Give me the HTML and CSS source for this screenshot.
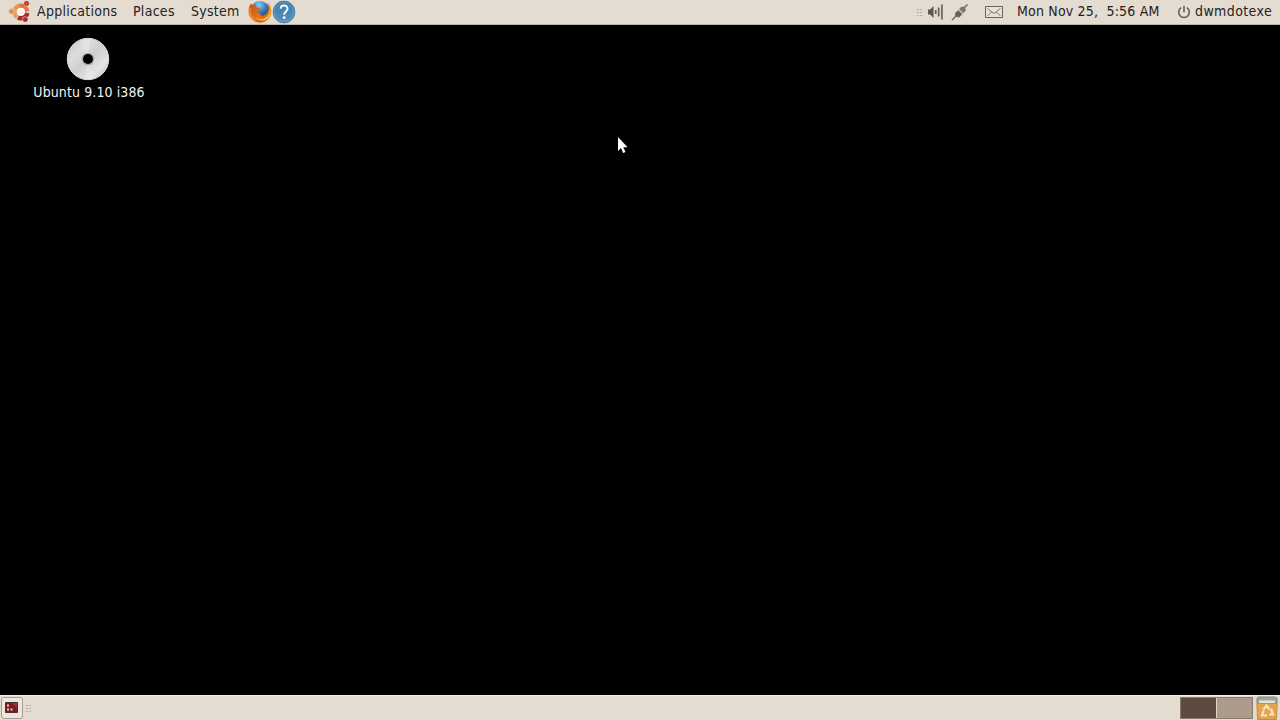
FILE: index.html
```html
<!DOCTYPE html>
<html lang="en">
<head>
    <meta charset="UTF-8">
    <meta name="viewport" content="width=device-width, initial-scale=1.0">
    <title>Desktop</title>
    <link rel="stylesheet" href="styles.css">
</head>
<body>
<header class="panel panel-top">
    <nav class="menu">
        <svg class="logo" width="24" height="24" viewBox="0 0 24 24">
            <g fill="none" stroke-width="4.4">
                <path d="M7.2 8.8A6.6 6.6 0 0 1 12.6 5.6" stroke="#e9954c"/>
                <path d="M7.2 8.8A6.6 6.6 0 0 0 9.2 17.2" stroke="#e7a15c"/>
                <path d="M10 17.6A6.6 6.6 0 0 0 19.3 13" stroke="#a92a2c"/>
                <path d="M12 5.8A6.6 6.6 0 0 1 19.2 11.5" stroke="#e2743c"/>
            </g>
            <circle cx="13" cy="11.8" r="4" fill="#fff5ea"/>
            <g stroke="#f3e3d4" stroke-width=".6">
                <circle cx="3.6" cy="11.4" r="2.9" fill="#e98d42"/>
                <circle cx="18.5" cy="3.5" r="2.8" fill="#b52a26"/>
                <circle cx="17.2" cy="19.5" r="2.8" fill="#b52428"/>
            </g>
            <circle cx="18.5" cy="3.5" r="1" fill="#dc7260"/>
        </svg>
        <span class="menu-item applications">Applications</span>
        <span class="menu-item places">Places</span>
        <span class="menu-item system">System</span>
        <svg class="launcher" width="24" height="24" viewBox="0 0 24 24">
            <defs>
                <radialGradient id="globe" cx=".45" cy=".2" r=".75">
                    <stop offset="0" stop-color="#8cd0ee"/>
                    <stop offset=".5" stop-color="#3477b8"/>
                    <stop offset="1" stop-color="#182f70"/>
                </radialGradient>
                <linearGradient id="fox" x1="0" y1="0" x2="1" y2="1">
                    <stop offset="0" stop-color="#c84b16"/>
                    <stop offset=".55" stop-color="#e87219"/>
                    <stop offset="1" stop-color="#c95514"/>
                </linearGradient>
            </defs>
            <circle cx="12" cy="11" r="10" fill="url(#globe)"/>
            <path d="M3 3.5C.2 7-.4 13 2.4 17.4 5.2 22 11 24 16 22c6-2.4 8.5-8.7 6.8-14.6-.6-2.1-1.6-3.6-3.2-5 1.3 2.8 1.6 6.3.2 9-1.8 3.7-5.6 5.1-8.6 3.5l3.1-1.2c-2.8.2-4.6-.9-5-2.9l3.3-.7.7-1.7-4.2-.6C8 7 7.6 6 8 5 6.4 4.6 5.1 4.7 4 5z" fill="url(#fox)"/>
            <path d="M20 3c2.4 4 2.5 9.5-.6 12.9-3.4 3.7-8.5 4-12 1.4 3.9 4.7 11.5 4.4 14.2-1C23.8 12 23 6.5 20 3z" fill="#f8bd32"/>
            <path d="M2 8c-.8 6 1.2 10.3 5.4 12.5" fill="none" stroke="#ef9a3b" stroke-width="1.3"/>
        </svg>
        <svg class="launcher" width="24" height="24" viewBox="0 0 24 24">
            <defs>
                <linearGradient id="help" x1="0" y1="0" x2="0" y2="1">
                    <stop offset="0" stop-color="#3f7aa8"/>
                    <stop offset="1" stop-color="#5692bd"/>
                </linearGradient>
            </defs>
            <circle cx="12" cy="12" r="10.9" fill="url(#help)" stroke="#3c76a3" stroke-width=".8"/>
            <circle cx="12" cy="12" r="9.6" fill="none" stroke="#7eaccd" stroke-width=".6"/>
            <path d="M8.6 8.8c.1-4.6 7-4.3 6.9-.1 0 2.9-3.4 3-3.4 6" fill="none" stroke="#f4f9fc" stroke-width="2"/>
            <circle cx="12.1" cy="17.7" r="1.4" fill="#f4f9fc"/>
        </svg>
    </nav>
    <div class="tray">
        <svg class="grip" width="6" height="10" viewBox="0 0 6 10">
            <path d="M0 1.5h5M0 4.5h5M0 7.5h5" stroke="#b9b1a6" stroke-dasharray="2 1"/>
        </svg>
        <svg class="volume" width="18" height="18" viewBox="0 0 18 18">
            <path d="M1 6.5h2.2L6.5 3v12L3.2 11.5H1z" fill="#5b5853"/>
            <path d="M8.7 7v4M11.7 4.5v9M14.9 1.5v15" stroke="#66625c" stroke-width="1.7"/>
        </svg>
        <svg class="network" width="18" height="18" viewBox="0 0 18 18">
            <path d="M1 17l5-5M12 6l4.5-4.5" stroke="#77716a" stroke-width="1.6"/>
            <path d="M4.5 9.5l3-2.5 4 4-2.8 3a3.2 3.2 0 0 1-4.2-4.5z" fill="#68635d"/>
            <path d="M8 6l2-2a3.1 3.1 0 0 1 4.3 4.3l-2.2 2z" fill="#7b756d"/>
            <path d="M7 6.5l5 5" stroke="#ddd5ca" stroke-width=".5"/>
        </svg>
        <svg class="mail" width="20" height="14" viewBox="0 0 20 14">
            <path d="M1.5 1.5h17v11h-17z" fill="#e8e3da" stroke="#66625b"/>
            <path d="M3.5 3.5l6.5 5 6.5-5M3.5 11l4-4M16.5 11l-4-4" fill="none" stroke="#77726b"/>
        </svg>
        <span class="clock">Mon Nov 25,&nbsp; 5:56 AM</span>
        <svg class="power" width="14" height="14" viewBox="0 0 14 14">
            <path d="M4.2 2.7a5.3 5.3 0 1 0 5.6 0M7 .7v6.5" fill="none" stroke="#5d5953" stroke-width="1.5"/>
        </svg>
        <span class="user">dwmdotexe</span>
    </div>
</header>

<main class="desktop">
    <div class="volume-icon">
        <svg class="disc" width="44" height="44" viewBox="0 0 44 44">
            <defs>
                <linearGradient id="disc" x1="0" y1="0" x2="1" y2="1">
                    <stop offset="0" stop-color="#c4c4c4"/>
                    <stop offset=".3" stop-color="#dedede"/>
                    <stop offset=".5" stop-color="#cfcfcf"/>
                    <stop offset=".75" stop-color="#e4e4e4"/>
                    <stop offset="1" stop-color="#b4b4b4"/>
                </linearGradient>
            </defs>
            <circle cx="22" cy="22" r="20.7" fill="url(#disc)" stroke="#ddd"/>
            <path d="M22 22L14 3 24 1.5zM22 22l8 19-11 1.5z" fill="#eee" opacity=".4"/>
            <circle cx="22" cy="22" r="6.3" fill="#aaa"/>
            <circle cx="22" cy="22" r="5" fill="#000"/>
        </svg>
        <span class="volume-label">Ubuntu 9.10 i386</span>
    </div>
    <svg class="pointer" width="12" height="18" viewBox="0 0 12 18">
        <path d="M1 1v14l3-3 2.2 5 2.3-1-2.2-4.8h4.3z" fill="#fff"/>
    </svg>
</main>

<footer class="panel panel-bottom">
    <div class="show-desktop">
        <svg width="14" height="12" viewBox="0 0 14 12">
            <path d="M.5.5h12v10H.5z" fill="#7c1d23" stroke="#483030"/>
            <path d="M7 1h5v5z" fill="#a4343b"/>
            <path d="M2 2.5h2v2H2zM2 6.5h2v2H2zM5.5 6.5h2v2h-2z" fill="#e6c9c4"/>
        </svg>
    </div>
    <svg class="grip" width="6" height="10" viewBox="0 0 6 10">
        <path d="M0 1.5h5M0 4.5h5M0 7.5h5" stroke="#b9b1a6" stroke-dasharray="2 1"/>
    </svg>
    <div class="workspaces">
        <div class="workspace active"></div>
        <div class="workspace"></div>
    </div>
    <svg class="trash" width="22" height="24" viewBox="0 0 22 24">
        <path d="M1 2l2-1h16l2 1v5H1z" fill="#a3a39b" stroke="#8f897b"/>
        <path d="M3 4.5h16V8H3z" fill="#e1e3dc"/>
        <path d="M.8 7.5h20.4l-.8 16H1.6z" fill="#e2a54f" stroke="#cb8b3b"/>
        <path d="M7.5 13.5l3-4 3 4M15 13l2 5.5h-4M11 19.5H6l1.5-5" fill="none" stroke="#fae5c2" stroke-width="2.2"/>
    </svg>
</footer>
</body>
</html>
```

FILE: styles.css
```css
body {
    display: flex;
    flex-direction: column;
    height: 100vh;
    margin: 0;
    overflow: hidden;
    background-color: #000;
    color: #24211e;
    font-family: 'DejaVu Sans Condensed', 'DejaVu Sans', sans-serif;
    font-size: 14px;
    font-stretch: condensed;
    line-height: 16px;
    white-space: nowrap;
}
svg {
    display: block;
    flex-shrink: 0;
}
.panel {
    display: flex;
    box-sizing: border-box;
    height: 25px;
    background-color: #e4dcd1;
}
.panel-top {
    justify-content: space-between;
    padding: 0 8px;
    border-bottom: 1px solid #b9b2a8;
}
.menu, .tray {
    display: flex;
    align-items: center;
    height: 24px;
}
.menu-item, .clock, .user {
    padding-bottom: 2px;
}
.menu-item {
    box-sizing: border-box;
    letter-spacing: 0.28px;
}
.applications {
    width: 96px;
    margin-left: 5px;
}
.places {
    width: 58px;
}
.system {
    width: 57px;
}
.grip {
    margin-top: 1px;
}
.volume {
    margin-left: 4px;
}
.network {
    margin-left: 6px;
}
.mail {
    margin-left: 15px;
}
.clock {
    width: 143px;
    margin-left: 13px;
    letter-spacing: 0.18px;
}
.power {
    margin-left: 17px;
}
.user {
    width: 77px;
    margin-left: 4px;
    letter-spacing: 0.4px;
}
.desktop {
    position: relative;
    flex: 1;
}
.volume-icon {
    display: flex;
    flex-direction: column;
    align-items: center;
    width: 136px;
    margin: 12px 0 0 20px;
    color: #f2f2f2;
}
.volume-label {
    margin-top: 3px;
    padding-left: 2px;
    letter-spacing: 0.1px;
}
.pointer {
    position: absolute;
    left: 617px;
    top: 111px;
}
.panel-bottom {
    align-items: center;
    padding-left: 1px;
    padding-right: 2px;
    border-top: 1px solid #f3efe9;
}
.show-desktop {
    display: flex;
    align-items: center;
    justify-content: center;
    box-sizing: border-box;
    width: 22px;
    height: 22px;
    border: 1px solid #a59d93;
    border-radius: 3px;
    background-color: #ece6dd;
}
.panel-bottom .grip {
    margin-left: 3px;
}
.workspaces {
    display: flex;
    gap: 1px;
    box-sizing: border-box;
    width: 73px;
    height: 22px;
    margin-left: auto;
    margin-right: 3px;
    border: 1px solid #887b6e;
    background-color: #e1d6ca;
}
.workspace {
    flex: 1;
    background-color: #ac9b8a;
}
.workspace.active {
    background-color: #5e493e;
}
```
